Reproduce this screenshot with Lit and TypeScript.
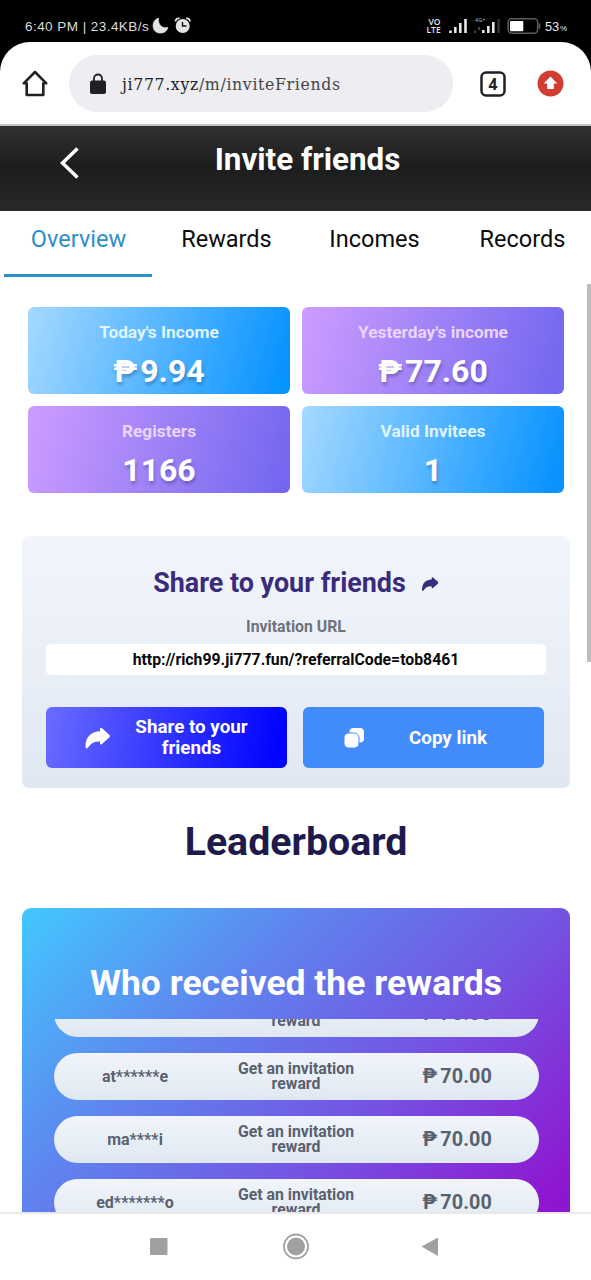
import { LitElement, html, css, svg } from "lit";
import { customElement, state } from "lit/decorators.js";
import { classMap } from "lit/directives/class-map.js";

const sharePath = svg`<path d="M1.500 21C1.300 10.500 8 5.300 16 5.300V3.200Q16 .8 18 2.300L25.300 8.800Q26.600 10.200 25.300 11.600L18 17.900Q16 19.300 16 17V15.600C10.500 15 7 17 4 21.500Q2 23.500 1.500 21Z" fill="currentColor"/>`;

@customElement("phone-status")
class PhoneStatus extends LitElement {
  static styles = css`
    :host { display: flex; align-items: flex-start; height: 42px; padding: 0 24px 0 25px; box-sizing: border-box; background: #000; color: #dcdcdc; }
    .clock { padding-top: 19px; font: 13.5px/16px "Liberation Sans", sans-serif; letter-spacing: 0.45px; width: 127px; white-space: pre; }
    svg { display: block; flex: none; }
    .left { padding-top: 16px; }
    .right { margin-left: auto; padding-top: 16px; }
  `;
  render() {
    return html`
      <span class="clock">6:40 PM | 23.4KB/s</span>
      <svg class="left" width="40" height="20" viewBox="152 16 40 20" fill="#e4e4e4">
        <path d="M158.500 18.300C151 20 151 33 160.500 33C164.500 33 167 31 167.800 27.500C162 29 157.500 24 158.500 18.300Z" stroke="#e4e4e4" stroke-width=".8" />
        <circle cx="182.700" cy="26" r="7" />
        <path d="M175.500 21.500a3 3 0 0 1 4-3M190 21.500a3 3 0 0 0-4-3" stroke="#e4e4e4" stroke-width="1.800" fill="none" />
        <path d="M182.500 22V26H186.500" stroke="#111" stroke-width="1.400" fill="none" />
      </svg>
      <svg class="right" width="143" height="20" viewBox="424 16 143 20" fill="#e8e8e8">
        <text x="428.500" y="24.500" font-family="Open Sans" font-weight="600" font-size="8.500">VO</text>
        <text x="426.500" y="33" font-family="Open Sans" font-weight="600" font-size="8.500">LTE</text>
        <path d="M450.500 33v-2.500M455.300 33v-6M460.300 33v-10M465.500 33v-14" stroke="#e8e8e8" stroke-width="2.600" />
        <text x="475" y="22" font-size="5.500" font-family="Open Sans" fill="#bbb">4G+</text>
        <path d="M475 33v-2.500M479 30v-3" stroke="#444" stroke-width="2" />
        <path d="M483.300 33v-3M488.300 33v-7M493.300 33v-11" stroke="#e8e8e8" stroke-width="2.600" />
        <path d="M498.500 33v-14" stroke="#333" stroke-width="2.500" />
        <rect x="508.200" y="18.800" width="29.500" height="14.500" rx="3.500" fill="none" stroke="#5a5a5a" stroke-width="1.600" />
        <rect x="510" y="21" width="13.300" height="10.300" rx="1" fill="#fff" />
        <path d="M539.500 23.500v5" stroke="#5a5a5a" stroke-width="1.600" />
        <text x="545" y="31" font-size="12.800" font-family="Liberation Sans">53</text>
        <text x="560" y="31" font-size="8" font-family="Liberation Sans">%</text>
      </svg>`;
  }
}

@customElement("browser-bar")
class BrowserBar extends LitElement {
  static styles = css`
    :host { display: block; background: #000; }
    .bar { display: flex; align-items: center; height: 84px; box-sizing: border-box; padding: 0 27px 0 22px; background: #fff; border-radius: 30px 30px 0 0; border-bottom: 2px solid #c4c6c4; }
    .url { display: flex; align-items: center; width: 384px; height: 57px; margin: 1px 26px 0 21px; padding-left: 20px; box-sizing: border-box; border-radius: 29px; background: #ededf2; }
    .address { margin-left: 15px; color: #44454a; font: 17.500px/24px "DejaVu Serif Condensed", "DejaVu Serif", serif; font-stretch: condensed; letter-spacing: 0.650px; white-space: nowrap; }
    .host { color: #202124; }
    svg { display: block; flex: none; }
    .up { margin-left: auto; }
  `;
  render() {
    return html`<div class="bar">
      <svg width="26" height="28" viewBox="0 0 26 28" fill="none" stroke="#202124" stroke-width="2.600" stroke-linejoin="round"><path d="M13 3L1.700 14.300H4.700V26H21.300V14.300H24.300Z" /></svg>
      <div class="url">
        <svg width="18" height="22" viewBox="0 0 18 22"><rect x="1" y="7.500" width="16" height="13.500" rx="2" fill="#202124" /><path d="M5 8V5.500a4 4 0 0 1 8 0V8" fill="none" stroke="#202124" stroke-width="1.800" /></svg>
        <span class="address"><span class="host">ji777.xyz</span>/m/inviteFriends</span>
      </div>
      <svg width="28" height="30" viewBox="0 -2 28 30"><rect x="2.500" y="2.500" width="23" height="23" rx="4.500" fill="none" stroke="#202124" stroke-width="2.500" /><text x="14" y="19.500" text-anchor="middle" font-family="Noto Sans" font-weight="700" font-size="15.500" fill="#202124">4</text></svg>
      <svg class="up" width="27" height="28" viewBox="0 -1 27 28"><circle cx="13.500" cy="13.500" r="13" fill="#cf3e30" /><path d="M13.500 6.500L20.300 13.500H16.800V19H10.200V13.500H6.700Z" fill="#fff" /></svg>
    </div>`;
  }
}

@customElement("system-nav")
class SystemNav extends LitElement {
  static styles = css`
    :host { display: flex; align-items: flex-start; justify-content: center; height: 68px; padding: 18px 2px 0 0; box-sizing: border-box; border-top: 2px solid #e9e9e9; background: #fff; }
    svg { display: block; }
  `;
  render() {
    return html`<svg width="291" height="28" viewBox="149 1232 291 28" fill="#a0a0a0">
      <rect x="150" y="1238" width="17.500" height="17" rx="1" />
      <circle cx="296" cy="1246.500" r="12" fill="none" stroke="#a0a0a0" stroke-width="1.800" /><circle cx="296" cy="1246.500" r="9" />
      <path d="M421.500 1246.500L438 1237.500V1256Z" />
    </svg>`;
  }
}

@customElement("app-root")
class AppRoot extends LitElement {
  @state() private tab = "Overview";
  private stats = [
    { label: "Today's Income", value: "9.94", money: true, tone: "blue" },
    { label: "Yesterday's income", value: "77.60", money: true, tone: "purple" },
    { label: "Registers", value: "1166", money: false, tone: "purple" },
    { label: "Valid Invitees", value: "1", money: false, tone: "blue" },
  ];
  private winners = ["", "at******e", "ma****i", "ed*******o"];

  static styles = css`
    :host { display: flex; flex-direction: column; width: 591px; height: 1280px; overflow: hidden; background: #fff; font-family: Roboto, sans-serif; }
    phone-status, browser-bar, system-nav, .head, .tabs { flex: none; }
    .head { display: grid; grid-template-columns: 140px 1fr 116px; height: 85px; box-sizing: border-box; padding-top: 15px; background: linear-gradient(#303030, #1d1d1d 50%, #202122 65%, #27292b); color: #fff; }
    .back { margin: 4px 0 0 59px; }
    .title { margin: 0; text-align: center; font-size: 31.400px; font-weight: 700; line-height: 37px; white-space: nowrap; }
    .tabs { display: grid; grid-template-columns: repeat(4, 148px); padding-left: 4px; height: 66px; }
    .tab { text-align: center; font-size: 23.500px; line-height: 56px; color: #0c0c0c; border-bottom: 3px solid transparent; box-sizing: border-box; padding-left: 1px; }
    .tab.on { color: #2e8ec9; border-color: #2e90cb; }
    .view { position: relative; flex: 1; min-height: 0; overflow: hidden; padding: 30px 21px 0 22px; }
    .thumb { position: absolute; right: 0; top: 7px; width: 4px; height: 378px; background: #bdbdbd; }
    .stats { display: grid; grid-template-columns: 262px 262px; gap: 12px; margin-left: 6px; }
    .stat { height: 87px; box-sizing: border-box; padding-top: 13px; border-radius: 6px; text-align: center; font-weight: 700; }
    .blue { background: linear-gradient(105deg, #a5d9ff, #0893ff 96%); }
    .purple { background: linear-gradient(105deg, #cd9dff, #7468ef 96%); }
    .label { font-size: 17.300px; line-height: 24px; color: #dff6ff; }
    .purple .label { color: #ead5ff; }
    .value { margin-top: 8px; font-size: 32px; line-height: 38px; color: #fff; text-shadow: 1px 3px 3px rgba(30, 40, 90, 0.3); }
    .peso { margin-right: 3px; }
    .share { margin-top: 43px; height: 252px; box-sizing: border-box; padding: 29px 24px 0; border-radius: 7px; background: linear-gradient(#f2f6fb, #ebeff8 45%, #dfe8f1); }
    .share-title { display: flex; align-items: center; justify-content: center; gap: 15px; height: 36px; color: #3a2b7c; font-size: 26.900px; font-weight: 700; white-space: nowrap; }
    .share-title svg { margin-top: 1px; }
    .caption { margin-top: 15px; text-align: center; font-size: 15.800px; line-height: 22px; font-weight: 700; color: #6f737c; }
    .link { margin-top: 6px; height: 31px; border-radius: 5px; background: #fff; text-align: center; font-size: 15.800px; line-height: 31px; font-weight: 700; color: #090909; }
    .actions { display: grid; grid-template-columns: 241px 241px; gap: 15.500px; margin-top: 32px; }
    .action { display: grid; grid-template-columns: 89px 113px; align-items: center; height: 61px; border-radius: 6px; color: #fff; font-size: 18.800px; font-weight: 700; line-height: 21px; text-align: center; white-space: nowrap; }
    .action svg { margin-left: 38px; }
    .action.copy svg { margin-left: 40px; }
    .copy span { padding-top: 1px; }
    .send { background: linear-gradient(100deg, #6a6cff, #0003ff 95%); }
    .copy { background: #418bfb; }
    .board { margin: 30px 0 0; text-align: center; color: #201a4c; font-size: 39.300px; line-height: 48px; font-weight: 700; }
    .rewards { margin-top: 42px; height: 450px; border-radius: 9px; background: linear-gradient(135deg, #42c8ff, #5f84ee 29%, #7355e2 54%, #8f16d0 82%); overflow: hidden; }
    .rewards-title { padding-top: 53px; margin: 0; text-align: center; color: #fff; font-size: 35.500px; line-height: 44px; font-weight: 700; white-space: nowrap; }
    .list { display: flex; flex-direction: column; justify-content: flex-end; gap: 16px; margin: 14px 31px 0 31.500px; height: 207px; overflow: hidden; }
    .row { flex: none; display: grid; grid-template-columns: 163px 159px 1fr; place-items: center; height: 47px; border-radius: 24px; background: linear-gradient(#f1f5fb, #dfe8f1); color: #59616f; font-weight: 700; text-align: center; }
    .user { font-size: 16px; }
    .what { font-size: 15.800px; line-height: 15.500px; padding-bottom: 1px; }
    .sum { font-size: 19.800px; letter-spacing: 0.100px; white-space: nowrap; }
    svg { display: block; }
  `;

  render() {
    return html`
      <phone-status></phone-status>
      <browser-bar></browser-bar>
      <header class="head">
        <svg class="back" width="22" height="36" viewBox="0 0 22 36" fill="none" stroke="#fff" stroke-width="3.500"><path d="M18.500 3.500L3.500 18L18.500 32.500" /></svg>
        <h1 class="title">Invite friends</h1>
      </header>
      <nav class="tabs">
        ${["Overview", "Rewards", "Incomes", "Records"].map(
          (t) => html`<div class=${classMap({ tab: true, on: t === this.tab })} @click=${() => (this.tab = t)}>${t}</div>`
        )}
      </nav>
      <main class="view">
        <div class="thumb"></div>
        <section class="stats">
          ${this.stats.map(
            (s) => html`<div class="stat ${s.tone}">
              <div class="label">${s.label}</div>
              <div class="value">${s.money ? html`<span class="peso">₱</span>` : ""}${s.value}</div>
            </div>`
          )}
        </section>
        <section class="share">
          <div class="share-title">Share to your friends<svg width="18" height="16" viewBox="0 0 27 24">${sharePath}</svg></div>
          <div class="caption">Invitation URL</div>
          <div class="link">http://rich99.ji777.fun/?referralCode=tob8461</div>
          <div class="actions">
            <div class="action send"><svg width="27" height="24" viewBox="0 0 27 24">${sharePath}</svg><span>Share to your<br />friends</span></div>
            <div class="action copy"><svg width="22" height="22" viewBox="0 0 22 22"><rect x="6.500" y="1" width="14.500" height="14.500" rx="4" fill="#fff" /><rect x="1" y="6" width="15" height="15" rx="4.500" fill="#fff" stroke="#418bfb" stroke-width="1" /></svg><span>Copy link</span></div>
          </div>
        </section>
        <h2 class="board">Leaderboard</h2>
        <section class="rewards">
          <h3 class="rewards-title">Who received the rewards</h3>
          <div class="list">
            ${this.winners.map(
              (w) => html`<div class="row"><span class="user">${w}</span><span class="what">Get an invitation<br />reward</span><span class="sum"><span class="peso">₱</span>70.00</span></div>`
            )}
          </div>
        </section>
      </main>
      <system-nav></system-nav>`;
  }
}
